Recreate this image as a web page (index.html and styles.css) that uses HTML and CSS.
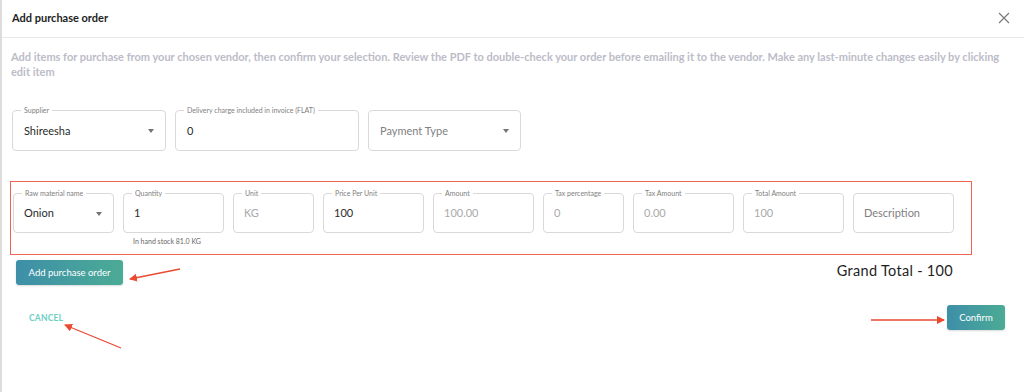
FILE: index.html
```html
<!DOCTYPE html>
<html>
<head>
<meta charset="utf-8">
<link rel="stylesheet" href="styles.css">
</head>
<body>
<div class="dialog">
  <div class="header">
    <span class="title">Add purchase order</span>
    <svg class="close" width="12" height="12" viewBox="0 0 12 12"><path d="M1 1L11 11M11 1L1 11" stroke="#7a7a7a" stroke-width="1.2" fill="none"/></svg>
  </div>
  <p class="desc">Add items for purchase from your chosen vendor, then confirm your selection. Review the PDF to double-check your order before emailing it to the vendor. Make any last-minute changes easily by clicking edit item</p>

  <div class="row1">
    <div class="field w154"><span class="label">Supplier</span><span class="val">Shireesha</span><span class="caret"></span></div>
    <div class="field w184"><span class="label">Delivery charge included in invoice (FLAT)</span><span class="val">0</span></div>
    <div class="field w153"><span class="val ph">Payment Type</span><span class="caret"></span></div>
  </div>

  <div class="itembox">
    <div class="items">
      <div class="col"><div class="field f2 w101"><span class="label">Raw material name</span><span class="val">Onion</span><span class="caret"></span></div></div>
      <div class="col"><div class="field f2 w101"><span class="label">Quantity</span><span class="val">1</span></div><div class="stock">In hand stock 81.0 KG</div></div>
      <div class="col"><div class="field f2 w81"><span class="label">Unit</span><span class="val dis">KG</span></div></div>
      <div class="col"><div class="field f2 w101"><span class="label">Price Per Unit</span><span class="val">100</span></div></div>
      <div class="col"><div class="field f2 w101"><span class="label">Amount</span><span class="val dis">100.00</span></div></div>
      <div class="col"><div class="field f2 w81"><span class="label">Tax percentage</span><span class="val dis">0</span></div></div>
      <div class="col"><div class="field f2 w101"><span class="label">Tax Amount</span><span class="val dis">0.00</span></div></div>
      <div class="col"><div class="field f2 w101"><span class="label">Total Amount</span><span class="val dis">100</span></div></div>
      <div class="col"><div class="field f2 w101"><span class="val ph">Description</span></div></div>
    </div>
  </div>

  <div class="addrow">
    <button class="btn addbtn">Add purchase order</button>
    <div class="grand">Grand Total - 100</div>
  </div>

  <div class="footer">
    <span class="cancel">CANCEL</span>
    <button class="btn confirm">Confirm</button>
  </div>

  <svg class="arrows" width="1024" height="392" viewBox="0 0 1024 392">
    <defs>
      <marker id="ah" markerWidth="8" markerHeight="8" refX="7" refY="4" orient="auto" markerUnits="userSpaceOnUse">
        <path d="M0 0L8 4L0 8Z" fill="#ea4a32"/>
      </marker>
    </defs>
    <line x1="180" y1="269" x2="130" y2="279" stroke="#ea4a32" stroke-width="1.3" marker-end="url(#ah)"/>
    <line x1="121" y1="348" x2="65" y2="325" stroke="#ea4a32" stroke-width="1.3" marker-end="url(#ah)"/>
    <line x1="871" y1="320" x2="944" y2="320" stroke="#ea4a32" stroke-width="1.3" marker-end="url(#ah)"/>
  </svg>
</div>
</body>
</html>
```
FILE: styles.css
```css
html, body {
  margin: 0;
  padding: 0;
  background: #fff;
}
body {
  font-family: Lato, "Open Sans", sans-serif;
  width: 1024px;
  height: 392px;
  overflow: hidden;
}
.dialog {
  position: relative;
  width: 1024px;
  height: 392px;
  border-left: 2px solid #dcdcdc;
  box-sizing: border-box;
}
.header {
  height: 38px;
  border-bottom: 1px solid #e8e8e8;
  display: flex;
  align-items: center;
  justify-content: space-between;
  padding: 0 14px 0 10px;
  box-sizing: border-box;
}
.title {
  font-size: 11px;
  font-weight: 700;
  color: #1e1e1e;
  margin-top: -2px;
}
.close {
  margin-top: -2px;
}
.desc {
  margin: 11px 0 0 9px;
  width: 1000px;
  font-size: 11px;
  line-height: 15px;
  font-weight: 700;
  color: #bcbcc8;
  letter-spacing: 0;
}
.row1 {
  display: flex;
  gap: 9px;
  margin: 31px 0 0 10px;
}
.field {
  position: relative;
  height: 41px;
  border: 1px solid #d9d9d9;
  border-radius: 4px;
  box-sizing: border-box;
  display: flex;
  align-items: center;
  padding-left: 11px;
}
.f2 { height: 40px; padding-left: 10px; }
.w154 { width: 154px; }
.w184 { width: 184px; }
.w153 { width: 153px; }
.w101 { width: 101px; }
.w81 { width: 81px; }
.label {
  position: absolute;
  top: -6px;
  left: 8px;
  padding: 0 3px;
  background: #fff;
  font-size: 7px;
  line-height: 10px;
  color: #808080;
  white-space: nowrap;
}
.val {
  font-size: 11px;
  color: #2a2a2a;
}
.val.ph { color: #7f7f7f; }
.val.dis { color: #a9a9a9; }
.caret {
  position: absolute;
  right: 11px;
  top: 18px;
  width: 0;
  height: 0;
  border-left: 3.5px solid transparent;
  border-right: 3.5px solid transparent;
  border-top: 4px solid #747474;
}
.itembox {
  margin: 30px 0 0 8px;
  width: 962px;
  height: 74px;
  border: 1.5px solid #ef6450;
  box-sizing: border-box;
  padding: 10.5px 0 0 2px;
}
.items {
  display: flex;
  gap: 9px;
}
.col {
  display: flex;
  flex-direction: column;
}
.stock {
  font-size: 7px;
  color: #666;
  margin: 4px 0 0 10px;
}
.addrow {
  display: flex;
  align-items: center;
  justify-content: space-between;
  width: 937px;
  margin: 5px 0 0 14px;
}
.btn {
  border: none;
  border-radius: 3px;
  background: linear-gradient(90deg, #3e8fa8, #4bab95);
  color: #fff;
  font-family: Lato, "Open Sans", sans-serif;
  font-size: 9.5px;
  height: 25px;
  padding: 0;
  box-shadow: 0 1px 2px rgba(0,0,0,0.15);
}
.addbtn { width: 107px; }
.grand {
  font-size: 14.5px;
  color: #1e1e1e;
  margin-top: -4px;
  letter-spacing: 0.3px;
}
.footer {
  display: flex;
  align-items: center;
  justify-content: space-between;
  width: 976px;
  margin: 20px 0 0 27px;
}
.cancel {
  font-size: 8.5px;
  font-weight: 700;
  color: #6ccfc4;
  letter-spacing: 0.2px;
  margin-top: 1px;
}
.confirm { width: 58px; }
.arrows {
  position: absolute;
  left: -2px;
  top: 0;
  pointer-events: none;
}
```
